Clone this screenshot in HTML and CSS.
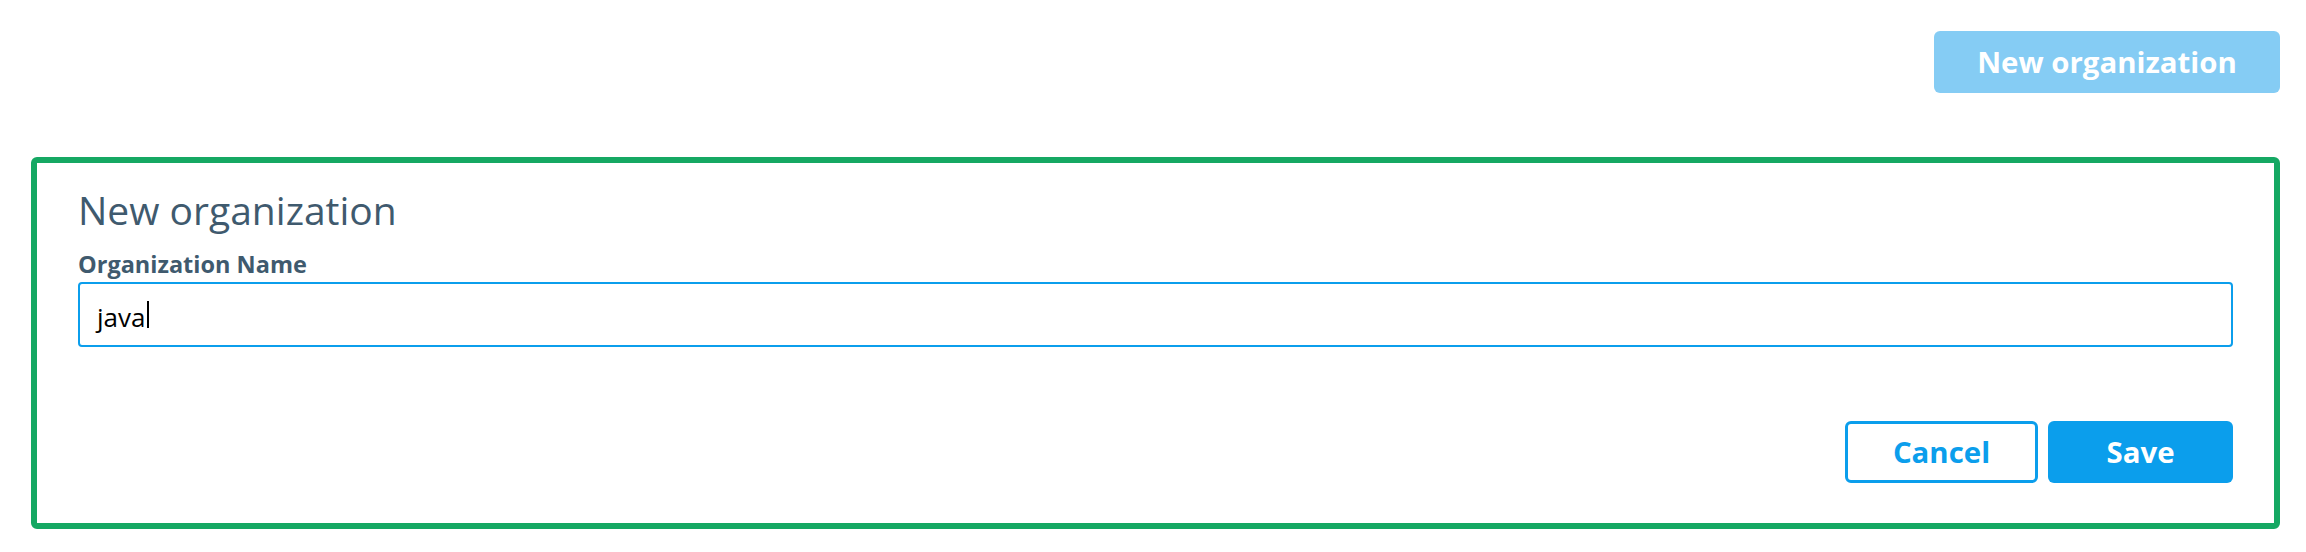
FILE: index.html
```html
<!DOCTYPE html>
<html lang="en">
<head>
<meta charset="utf-8">
<title>New organization</title>
<link rel="stylesheet" href="styles.css">
</head>
<body>
<div class="page">
  <div class="toolbar">
    <button class="btn btn-new" type="button">New organization</button>
  </div>
  <section class="card">
    <h2 class="card-title">New organization</h2>
    <label class="field-label">Organization Name</label>
    <div class="field"><span class="field-text">java</span><span class="caret"></span></div>
    <div class="actions">
      <button class="btn btn-outline" type="button">Cancel</button>
      <button class="btn btn-primary" type="button">Save</button>
    </div>
  </section>
</div>
</body>
</html>
```

FILE: styles.css
```css
html, body {
  margin: 0;
  padding: 0;
  background: #ffffff;
}

body {
  font-family: "Open Sans", "Noto Sans", sans-serif;
}

.page {
  padding: 31px 26px 0 31px;
}

.toolbar {
  display: flex;
  justify-content: flex-end;
  margin-bottom: 64px;
}

.btn {
  font-family: "Open Sans", "Noto Sans", sans-serif;
  font-weight: 700;
  font-size: 29.4px;
  height: 62px;
  box-sizing: border-box;
  border-radius: 6px;
  cursor: pointer;
  display: flex;
  align-items: center;
  justify-content: center;
  padding: 0;
}

.btn-new {
  background: #85ccf4;
  color: #ffffff;
  border: none;
  width: 346px;
}

.card {
  border: 6px solid #15a863;
  border-radius: 6px;
  padding: 24px 41px 40px 41px;
  display: flex;
  flex-direction: column;
}

.card-title {
  margin: 0 0 13px 0;
  font-weight: 400;
  font-size: 39px;
  line-height: 1.2;
  color: #3f5a6e;
}

.field-label {
  font-weight: 700;
  font-size: 23.5px;
  line-height: 1.5;
  color: #3f5a6e;
}

.field {
  height: 65px;
  box-sizing: border-box;
  border: 2px solid #0b9eec;
  border-radius: 4px;
  padding: 0 17px;
  display: flex;
  align-items: center;
  margin-bottom: 74px;
}

.field-text {
  font-family: "Open Sans", "Noto Sans", sans-serif;
  font-size: 26px;
  color: #000000;
  line-height: 1;
  position: relative;
  top: 2px;
}

.caret {
  display: inline-block;
  width: 2px;
  height: 27px;
  background: #000000;
  margin-left: 2px;
}

.actions {
  display: flex;
  justify-content: flex-end;
  gap: 10px;
}

.btn-outline {
  background: #ffffff;
  color: #0b9eec;
  border: 3px solid #0b9eec;
  width: 193px;
}

.btn-primary {
  background: #0b9eec;
  color: #ffffff;
  border: none;
  width: 185px;
}
```
